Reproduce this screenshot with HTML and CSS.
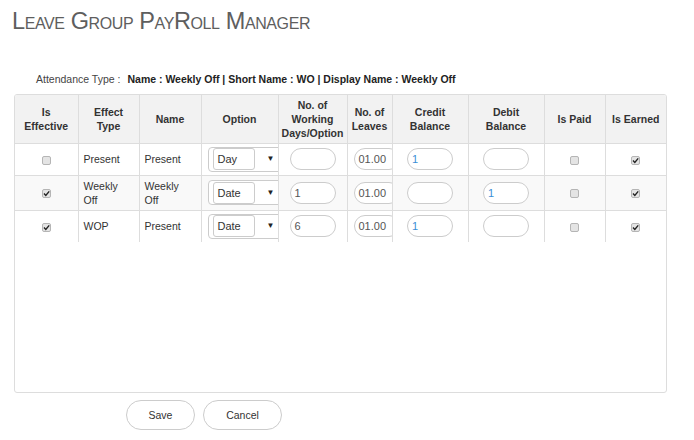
FILE: index.html
```html
<!DOCTYPE html>
<html>
<head>
<meta charset="utf-8">
<link rel="stylesheet" href="styles.css">
</head>
<body>
<div class="page">
  <h1 class="title">Leave Group PayRoll Manager</h1>
  <div class="att"><span class="att-label">Attendance Type :</span><span class="att-value">Name : Weekly Off | Short Name : WO | Display Name : Weekly Off</span></div>
  <div class="grid-box">
    <table class="grid">
      <colgroup>
        <col class="c1"><col class="c2"><col class="c3"><col class="c4"><col class="c5">
        <col class="c6"><col class="c7"><col class="c8"><col class="c9"><col class="c10">
      </colgroup>
      <thead>
        <tr>
          <th>Is<br>Effective</th>
          <th>Effect<br>Type</th>
          <th>Name</th>
          <th>Option</th>
          <th>No. of<br>Working<br>Days/Option</th>
          <th>No. of<br>Leaves</th>
          <th>Credit<br>Balance</th>
          <th>Debit<br>Balance</th>
          <th>Is Paid</th>
          <th>Is Earned</th>
        </tr>
      </thead>
      <tbody>
        <tr class="r1">
          <td class="center"><span class="cb"></span></td>
          <td>Present</td>
          <td>Present</td>
          <td class="clip"><div class="sel"><span class="sel-val">Day</span><span class="sel-arrow">&#9660;</span></div></td>
          <td class="center"><span class="inp"></span></td>
          <td class="clip"><span class="inp dark">01.00</span></td>
          <td class="center"><span class="inp blue">1</span></td>
          <td class="center"><span class="inp"></span></td>
          <td class="center"><span class="cb"></span></td>
          <td class="center"><span class="cb on"><svg viewBox="0 0 9 9" width="9" height="9"><path d="M2 4.6 L3.8 6.4 L7.2 2.4" fill="none" stroke="#222" stroke-width="1.4"/></svg></span></td>
        </tr>
        <tr class="alt">
          <td class="center"><span class="cb on"><svg viewBox="0 0 9 9" width="9" height="9"><path d="M2 4.6 L3.8 6.4 L7.2 2.4" fill="none" stroke="#222" stroke-width="1.4"/></svg></span></td>
          <td>Weekly<br>Off</td>
          <td>Weekly<br>Off</td>
          <td class="clip"><div class="sel"><span class="sel-val">Date</span><span class="sel-arrow">&#9660;</span></div></td>
          <td class="center"><span class="inp dark">1</span></td>
          <td class="clip"><span class="inp dark">01.00</span></td>
          <td class="center"><span class="inp"></span></td>
          <td class="center"><span class="inp blue">1</span></td>
          <td class="center"><span class="cb"></span></td>
          <td class="center"><span class="cb on"><svg viewBox="0 0 9 9" width="9" height="9"><path d="M2 4.6 L3.8 6.4 L7.2 2.4" fill="none" stroke="#222" stroke-width="1.4"/></svg></span></td>
        </tr>
        <tr class="r3">
          <td class="center"><span class="cb on"><svg viewBox="0 0 9 9" width="9" height="9"><path d="M2 4.6 L3.8 6.4 L7.2 2.4" fill="none" stroke="#222" stroke-width="1.4"/></svg></span></td>
          <td>WOP</td>
          <td>Present</td>
          <td class="clip"><div class="sel"><span class="sel-val">Date</span><span class="sel-arrow">&#9660;</span></div></td>
          <td class="center"><span class="inp dark">6</span></td>
          <td class="clip"><span class="inp dark">01.00</span></td>
          <td class="center"><span class="inp blue">1</span></td>
          <td class="center"><span class="inp"></span></td>
          <td class="center"><span class="cb"></span></td>
          <td class="center"><span class="cb on"><svg viewBox="0 0 9 9" width="9" height="9"><path d="M2 4.6 L3.8 6.4 L7.2 2.4" fill="none" stroke="#222" stroke-width="1.4"/></svg></span></td>
        </tr>
      </tbody>
    </table>
  </div>
  <div class="actions">
    <button class="btn btn-save">Save</button>
    <button class="btn btn-cancel">Cancel</button>
  </div>
</div>
</body>
</html>
```

FILE: styles.css
```css
* { box-sizing: border-box; }
html, body { margin: 0; padding: 0; background: #fff; }
body {
  font-family: "Liberation Sans", Arial, sans-serif;
  font-size: 10.5px;
  color: #333;
  width: 694px;
  height: 440px;
  overflow: hidden;
}
.page { display: flex; flex-direction: column; }
.title {
  margin: 7px 0 0 12px;
  font-size: 23.5px;
  letter-spacing: -0.4px;
  line-height: 28px;
  font-weight: normal;
  font-variant: small-caps;
  color: #5e5e5e;
}
.att {
  margin: 37px 0 0 36px;
  line-height: 14px;
  font-size: 10.5px;
}
.att-label { color: #444; margin-right: 7px; }
.att-value { font-weight: bold; color: #222; }
.grid-box {
  margin: 8px 0 0 14px;
  width: 653px;
  height: 299px;
  border: 1px solid #ddd;
  border-radius: 3px;
  overflow: hidden;
}
.grid {
  width: 651px;
  border-collapse: collapse;
  border-style: hidden;
  table-layout: fixed;
}
.c1 { width: 63px; }
.c2 { width: 61px; }
.c3 { width: 62px; }
.c4 { width: 77px; }
.c5 { width: 69px; }
.c6 { width: 45px; }
.c7 { width: 76px; }
.c8 { width: 76px; }
.c9 { width: 61px; }
.c10 { width: 61px; }
.grid th {
  background: #f2f2f2;
  font-weight: bold;
  color: #333;
  line-height: 14px;
  height: 48px;
  padding: 2px 0;
  border: 1px solid #ddd;
  text-align: center;
  vertical-align: middle;
}
.grid td {
  border: 1px solid #ddd;
  line-height: 14px;
  padding: 3px 5px;
  vertical-align: middle;
  height: 32px;
}
.grid tr.alt td { background: #f9f9f9; height: 33px; }
.grid tr.r3 td { height: 32px; }
.grid td.center { text-align: center; padding: 3px 0; }
.grid td.clip { overflow: hidden; padding: 3px 0 3px 6px; }
.sel {
  display: flex;
  align-items: center;
  width: 78px;
  height: 25px;
  border: 1px solid #ccc;
  border-radius: 4px;
  padding-left: 4px;
  background: #fff;
}
.sel-val {
  display: block;
  width: 42px;
  height: 22px;
  line-height: 20px;
  border: 1px solid #ccc;
  border-radius: 3px;
  padding-left: 4px;
  color: #333;
  font-size: 11px;
}
.sel-arrow {
  font-size: 8px;
  margin-left: 12px;
  color: #222;
}
.inp {
  display: inline-block;
  vertical-align: middle;
  width: 46px;
  height: 22px;
  line-height: 20px;
  border: 1px solid #ccc;
  border-radius: 11px;
  background: #fff;
  padding-left: 4px;
  text-align: left;
  font-size: 11px;
}
.inp.dark { color: #555; }
.inp.blue { color: #3b8fd6; }
.cb {
  display: inline-block;
  vertical-align: middle;
  width: 9px;
  height: 9px;
  border: 1px solid #b5b5b5;
  border-radius: 2px;
  background: #e4e4e4;
  position: relative;
}
.cb svg { position: absolute; left: -1px; top: -1px; }
.actions {
  display: flex;
  gap: 8px;
  margin: 7px 0 0 126px;
}
.btn {
  height: 30px;
  padding: 0;
  border: 1px solid #ccc;
  border-radius: 15px;
  background: #fff;
  color: #333;
  font-family: "Liberation Sans", Arial, sans-serif;
  font-size: 10.5px;
}
.btn-save { width: 69px; }
.btn-cancel { width: 79px; }
```
